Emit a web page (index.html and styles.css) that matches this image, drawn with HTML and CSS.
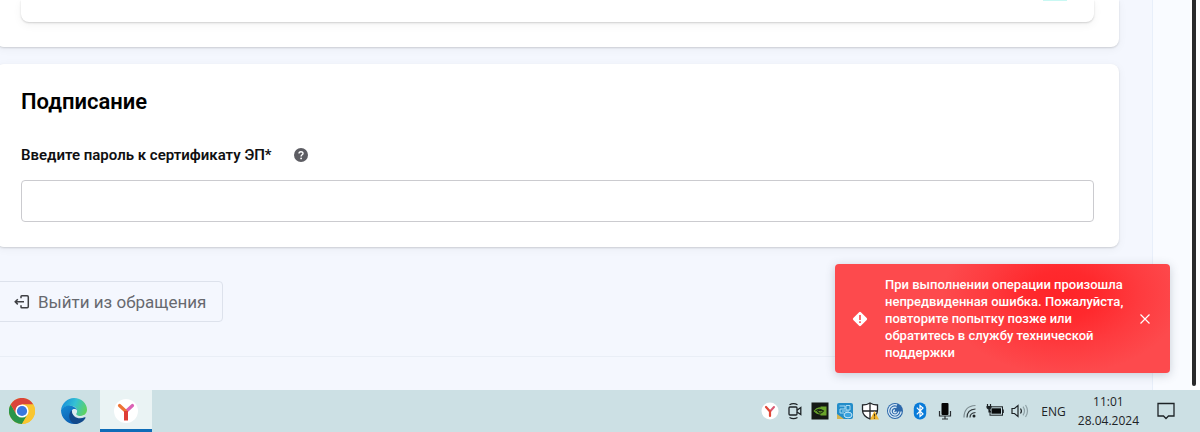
FILE: index.html
```html
<!DOCTYPE html>
<html lang="ru">
<head>
    <meta charset="UTF-8">
    <meta name="viewport" content="width=device-width, initial-scale=1.0">
    <title>Подписание</title>
    <link rel="stylesheet" href="styles.css">
</head>
<body>
    <div class="window">
        <main class="content">
            <section class="card card-prev">
                <div class="inner-card">
                    <span class="switch-dot"></span>
                </div>
            </section>

            <section class="card card-sign">
                <h2>Подписание</h2>
                <div class="label-row">
                    <label for="password">Введите пароль к сертификату ЭП*</label>
                    <svg class="help" viewBox="0 0 14 14">
                        <circle cx="7" cy="7" r="7" fill="#5d5d63"/>
                        <path d="M5 5.5C5 3.2 9 3.2 9 5.4C9 6.8 7.1 6.8 7.1 8.4" fill="none" stroke="#fff" stroke-width="1.4"/>
                        <circle cx="7.1" cy="10.4" r="0.9" fill="#fff"/>
                    </svg>
                </div>
                <input type="password" id="password" class="password">
            </section>

            <button type="button" class="exit">
                <svg viewBox="0 0 16 16" fill="none" stroke="#3f4044" stroke-width="1.5">
                    <path d="M7 4.2V2.6Q7 1.8 7.8 1.8H13.2Q14.3 1.8 14.3 2.9V12.6Q14.3 13.7 13.2 13.7H7.8Q7 13.7 7 12.9V11.3"/>
                    <path d="M10 7.8H1.2M3.8 5.2L1.2 7.8L3.8 10.4"/>
                </svg>
                Выйти из обращения
            </button>

            <div class="footer-line"></div>
        </main>
        <div class="side"></div>
        <div class="scroll"><div class="scroll-thumb"></div></div>

        <div class="toast" role="alert">
            <svg class="toast-icon" viewBox="0 0 16 16">
                <rect x="2.6" y="2.6" width="10.8" height="10.8" rx="1.3" fill="#fff" transform="rotate(45 8 8)"/>
                <path d="M8 4V9" stroke="#f8484c" stroke-width="1.6"/>
                <path d="M8 10.3V12" stroke="#f8484c" stroke-width="1.6"/>
            </svg>
            <p>При выполнении операции произошла непредвиденная ошибка. Пожалуйста, повторите попытку позже или обратитесь в службу технической поддержки</p>
            <button type="button" class="toast-close" aria-label="Закрыть">
                <svg viewBox="0 0 10 10" stroke="#fff" stroke-width="1.2"><path d="M0.5 0.5L9.5 9.5M9.5 0.5L0.5 9.5"/></svg>
            </button>
        </div>
    </div>

    <footer class="taskbar">
        <button type="button" class="app" aria-label="Chrome">
            <svg viewBox="0 0 26 26">
                <circle cx="13" cy="13" r="13" fill="#f9c631"/>
                <path d="M13 13L7.4 16.3L1.7 6.5A13 13 0 0 0 13 26L18.7 16.3Z" fill="#299549"/>
                <path d="M1.7 6.5A13 13 0 0 1 24.3 6.5H13L7.4 16.3Z" fill="#d9453a"/>
                <path d="M13 6.5H24.3A13 13 0 0 1 13 26L18.7 16.3Z" fill="#f9c631"/>
                <circle cx="13" cy="13" r="6.6" fill="#fff"/>
                <circle cx="13" cy="13" r="5.1" fill="#3978df"/>
            </svg>
        </button>
        <button type="button" class="app" aria-label="Edge">
            <svg viewBox="0 0 26 26">
                <defs>
                    <linearGradient id="edgeTop" x1="0" y1="0.3" x2="1" y2="0.6">
                        <stop offset="0" stop-color="#168ddb"/>
                        <stop offset="0.5" stop-color="#35c1d4"/>
                        <stop offset="1" stop-color="#5fd35e"/>
                    </linearGradient>
                    <linearGradient id="edgeLow" x1="0" y1="0" x2="0.6" y2="1">
                        <stop offset="0" stop-color="#158bd4"/>
                        <stop offset="1" stop-color="#0b5caf"/>
                    </linearGradient>
                </defs>
                <path d="M0 12C1 5 6.5 0 13 0C20.5 0 26 5.5 26 11.5C26 15.5 23 18 19.3 18C16 18 14.5 16.8 15.5 15.3C18 11 13 7.5 9 7.8C5 8 2 9.5 0 12Z" fill="url(#edgeTop)"/>
                <path d="M0 12C2 8.8 6 7.2 9.5 7.7C13 8.2 15.5 10 16 12.5C13 9.5 10 12 10 15.5C10 20.5 15.5 23.5 19.5 24.3C11 29 0 23 0 12Z" fill="url(#edgeLow)"/>
                <path d="M10.8 12.2C6.5 16 7.5 24 14 26C18.5 26 22.5 23.5 24.5 20C24.8 19.3 24.3 19 23.6 19.3C17.5 22 11 19 10.8 12.2Z" fill="#124a8b"/>
                <path d="M11 12.5C12.5 10 16.5 11 16 13.8C15.7 15 14.6 15.5 15.2 16.5C16.5 18.5 20.5 18.4 24 17C21.5 20.5 11.5 20.5 11 12.5Z" fill="#dcecf1"/>
            </svg>
        </button>
        <button type="button" class="app active" aria-label="Yandex">
            <svg viewBox="0 0 26 26">
                <circle cx="13" cy="13" r="12" fill="#fff"/>
                <path d="M19.5 7.5L13 13.5" stroke="#db62b5" stroke-width="3.2" stroke-linecap="round"/>
                <path d="M6.5 7.5L13 13.5" stroke="#ed7435" stroke-width="3.2" stroke-linecap="round"/>
                <path d="M13 13V22.5" stroke="#df3d35" stroke-width="4"/>
            </svg>
        </button>

        <div class="tray">
            <svg viewBox="0 0 18 18">
                <circle cx="9" cy="9" r="8.5" fill="#fff"/>
                <path d="M13 5L9 9.5" stroke="#d95a73" stroke-width="2" stroke-linecap="round"/>
                <path d="M5 5L9 9.5V14" fill="none" stroke="#df4838" stroke-width="2.2" stroke-linecap="round"/>
            </svg>
            <svg viewBox="0 0 18 18" fill="none" stroke="#1d2326" stroke-width="1.3">
                <rect x="3" y="5" width="8" height="8" rx="1"/>
                <path d="M11 8.3L14.8 5.5V12.5L11 10M3.5 2.7Q7.5 0.5 11.5 2.7M3.5 15.5Q7.5 17.7 11.5 15.5"/>
            </svg>
            <svg viewBox="0 0 18 18">
                <rect x="0.5" y="0.5" width="17" height="17" fill="#151915"/>
                <path d="M2.5 9Q6 4.5 9.5 5.5V4.5H15.5V13.5H9.5V12.5Q5.5 12.5 2.5 9Z" fill="#6aa52b"/>
                <path d="M4.5 9Q8 5.5 12.5 9Q9 13 6.5 9.5Q8.5 7.5 10.5 9.2" fill="none" stroke="#182411" stroke-width="1.1"/>
            </svg>
            <svg viewBox="0 0 18 18">
                <rect x="1" y="1" width="16" height="16" rx="2" fill="#238dc9"/>
                <path d="M1 12V17H8" fill="#d4b451"/>
                <path d="M3.5 4H9V7H4V11H8M10 3.5H14V8H10ZM6 9H13" fill="none" stroke="#a8dbf4" stroke-width="1"/>
                <ellipse cx="12" cy="13" rx="4" ry="2.8" fill="#3aa3df" stroke="#c8e8f7"/>
            </svg>
            <svg viewBox="0 0 18 18">
                <path d="M9 1Q12 3 16.5 3V8Q16.5 14 9 17Q1.5 14 1.5 8V3Q6 3 9 1Z" fill="#fff" stroke="#202427" stroke-width="1.3"/>
                <path d="M9 1V17M1.5 9H16.5" stroke="#202427" stroke-width="1.3"/>
                <path d="M13.5 9L18 17.5H9Z" fill="#f5b82e"/>
                <path d="M13.5 11.8V14.5M13.5 15.5V16.7" stroke="#4b3a13" stroke-width="1.2"/>
            </svg>
            <svg viewBox="0 0 18 18" fill="none" stroke-width="1.4">
                <circle cx="9" cy="9" r="8" fill="#2c68ab"/>
                <path d="M11 3A6.3 6.3 0 1 0 15.2 9.5M10.5 5.5A3.9 3.9 0 1 0 12.8 9.5M9 8A1.4 1.4 0 1 0 10.3 9.5" stroke="#d6e8f5"/>
            </svg>
            <svg viewBox="0 0 18 18">
                <rect x="2.8" y="0.5" width="12.4" height="17" rx="6" fill="#087bd9"/>
                <path d="M5.8 5.7L12 12L9 14.5V3.5L12 6L5.8 12.3" fill="none" stroke="#fff" stroke-width="1.2"/>
            </svg>
            <svg viewBox="0 0 18 18">
                <rect x="5.5" y="1" width="7" height="12" rx="1" fill="#050505"/>
                <path d="M3.5 9V14H14.5V9M9 14V17M6 17H12" fill="none" stroke="#2b3033" stroke-width="1.2"/>
            </svg>
            <svg viewBox="0 0 18 18" fill="none" stroke="#7c8c91" stroke-width="1.2">
                <path d="M3 15.5Q3 4 14.5 3.5"/>
                <path d="M6 15.5Q6 7.5 14.5 7M9 15.5Q9 11 14.5 10.5" stroke="#30383b"/>
                <circle cx="13" cy="14" r="1.5" fill="#1d2326" stroke="none"/>
            </svg>
            <svg viewBox="0 0 18 18">
                <rect x="4" y="4.8" width="12.5" height="8.4" fill="none" stroke="#1d2326"/>
                <rect x="5.5" y="6.3" width="9.5" height="5.4" fill="#080a0b"/>
                <path d="M16.5 7.5H17.8V11H16.5Z" fill="#1d2326"/>
                <path d="M1.5 2V5M4.5 2V5M3 7V10H5" stroke="#1d2326" stroke-width="1.2"/>
                <path d="M0.5 4H5.5V6Q3 9 0.5 6Z" fill="#1d2326"/>
            </svg>
            <svg viewBox="0 0 18 18" fill="none" stroke="#1d2326" stroke-width="1.2">
                <path d="M1 6.5H3.5L7 3.5V14.5L3.5 11.5H1Z"/>
                <path d="M9.5 6.5Q11.3 9 9.5 11.5"/>
                <path d="M12 4.7Q15 9 12 13.3M14.5 3Q18.5 9 14.5 15" stroke="#8fa1a6"/>
            </svg>
        </div>
        <span class="lang">ENG</span>
        <div class="clock">
            <span>11:01</span>
            <span>28.04.2024</span>
        </div>
        <button type="button" class="notices" aria-label="Уведомления">
            <svg viewBox="0 0 18 18" fill="none" stroke="#1d2326" stroke-width="1.3">
                <path d="M1 1.5H17V14H11.5L9 16.5L6.5 14H1Z"/>
            </svg>
        </button>
    </footer>
</body>
</html>
```
FILE: styles.css
```css
* {
    box-sizing: border-box;
}

body {
    margin: 0;
    min-height: 100vh;
    display: flex;
    flex-direction: column;
    font-family: Roboto, sans-serif;
    color: #101012;
    background-color: #f4f7fe;
}

button {
    font-family: inherit;
    border: none;
    background: none;
    padding: 0;
    cursor: pointer;
}

svg {
    display: block;
    flex: none;
}

.window {
    position: relative;
    flex: 1;
    display: flex;
    overflow: hidden;
}

.content {
    flex: 1;
    display: flex;
    flex-direction: column;
    align-items: flex-start;
    border-right: 1px solid #e8effa;
}

.card {
    align-self: stretch;
    margin: 0 33px 0 -4px;
    padding: 0 25px;
    background-color: #fff;
    border-radius: 8px;
    box-shadow: 0 1px 2px rgba(0, 0, 0, 0.14), 0 2px 10px rgba(0, 0, 0, 0.05);
}

.card-prev {
    padding-bottom: 25px;
    border-top-left-radius: 0;
    border-top-right-radius: 0;
}

.inner-card {
    position: relative;
    height: 22px;
    border-radius: 0 0 8px 8px;
    box-shadow: 0 1px 2px rgba(0, 0, 0, 0.16), 0 3px 10px rgba(0, 0, 0, 0.05);
}

.switch-dot {
    position: absolute;
    top: 0;
    right: 27px;
    width: 24px;
    height: 1px;
    background-color: #c9f8f3;
}

.card-sign {
    margin-top: 17px;
    padding-top: 24px;
    padding-bottom: 25px;
}

h2 {
    margin: 0 0 27px;
    font-size: 22px;
    line-height: 28px;
    font-weight: 600;
    color: #000;
}

.label-row {
    display: flex;
    align-items: center;
    gap: 22px;
    margin-bottom: 13px;
    font-size: 15px;
    line-height: 24px;
    font-weight: 600;
}

.help {
    width: 14px;
    height: 14px;
}

.password {
    display: block;
    width: 100%;
    height: 42px;
    padding: 0 12px;
    border: 1px solid #cbcbcf;
    border-radius: 4px;
    background-color: #fff;
    font-size: 15px;
}

.exit {
    display: flex;
    align-items: center;
    gap: 8px;
    height: 41px;
    margin: 34px 0 0 -4px;
    padding: 0 16px 0 17px;
    border: 1px solid #dde2ec;
    border-radius: 4px;
    font-size: 17px;
    color: #67696f;
}

.exit svg {
    width: 16px;
    height: 16px;
}

.footer-line {
    align-self: stretch;
    height: 1px;
    margin: 34px 0 24px;
    background-color: #e9eef6;
}

.side {
    width: 37px;
    background-color: #f9fbff;
}

.scroll {
    width: 10px;
    padding: 0 4px 4px 2px;
    background-color: #fff;
}

.scroll-thumb {
    height: 100%;
    background-color: #2b2b2b;
    border-radius: 0 0 2px 2px;
}

.toast {
    position: absolute;
    right: 30px;
    bottom: 17px;
    display: flex;
    align-items: center;
    width: 335px;
    padding: 12px 20px 12px 17px;
    border-radius: 4px;
    background: radial-gradient(ellipse 120px 80px at 68% 28%, #ff2428 0%, #ff292d 30%, #fe3b3f 65%, #fd4a4d 100%) #fd4a4d;
    box-shadow: 0 2px 10px rgba(60, 70, 90, 0.25);
    color: #fff;
}

.toast-icon {
    width: 16px;
    height: 16px;
}

.toast p {
    flex: 1;
    margin: 0 10px 0 17px;
    font-size: 13px;
    line-height: 17px;
    font-weight: 500;
}

.toast-close svg {
    width: 10px;
    height: 10px;
}

.taskbar {
    display: flex;
    align-items: center;
    height: 42px;
    padding-right: 25px;
    background-color: #cce0e4;
    font-family: "Open Sans", "Noto Sans", sans-serif;
    color: #1d2326;
}

.app {
    align-self: stretch;
    display: flex;
    align-items: center;
    justify-content: center;
    width: 52px;
    padding-right: 8px;
    border-bottom: 3px solid transparent;
    border-top: 3px solid transparent;
}

.app svg {
    width: 26px;
    height: 26px;
}

.app.active {
    padding-right: 0;
    margin-left: -4px;
    border-top-color: #eaf3f4;
    border-bottom-color: #0f6cb8;
    background-color: #eaf3f4;
}

.tray {
    display: flex;
    gap: 7px;
    margin-left: auto;
}

.tray svg {
    width: 18px;
    height: 18px;
}

.lang {
    margin-left: 12px;
    font-size: 12px;
}

.clock {
    display: flex;
    flex-direction: column;
    align-items: center;
    margin: 0 18px 0 12px;
    font-size: 12px;
    line-height: 19px;
}

.notices svg {
    width: 18px;
    height: 18px;
}
```
